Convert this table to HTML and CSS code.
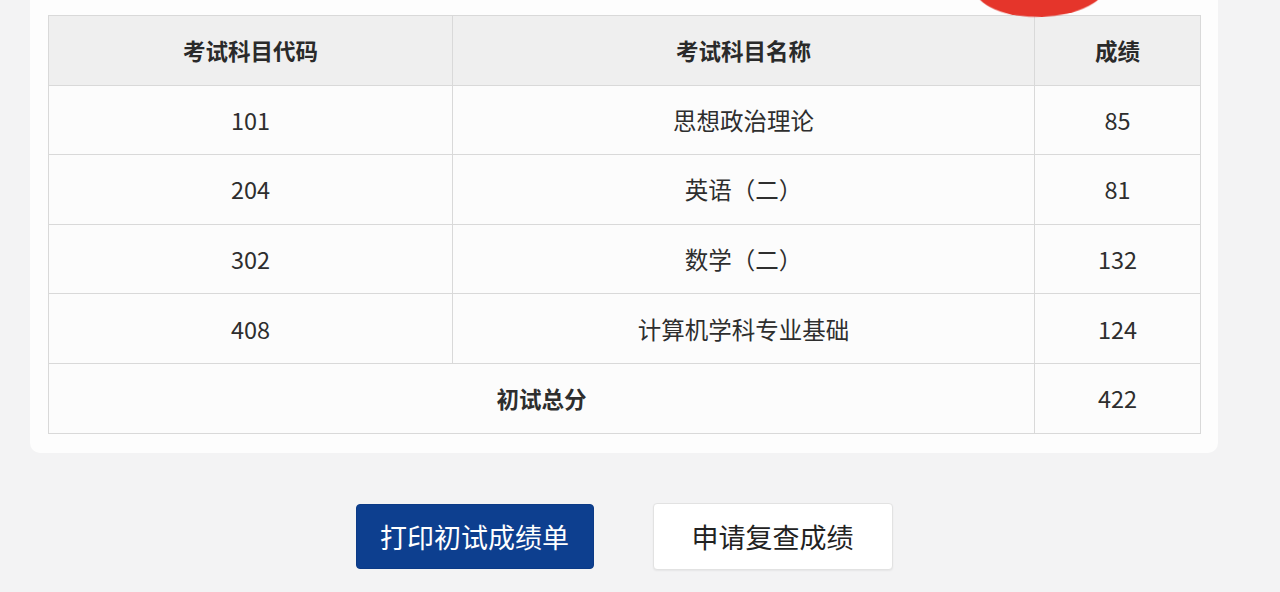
FILE: index.html
```html
<!DOCTYPE html>
<html lang="zh-CN">
<head>
<meta charset="utf-8">
<title>初试成绩</title>
<link rel="stylesheet" href="styles.css">
</head>
<body>
<div class="page">
  <div class="card">
    <span class="mark" aria-hidden="true"></span>
    <table class="scores">
      <thead>
        <tr>
          <th class="c-code">考试科目代码</th>
          <th class="c-name">考试科目名称</th>
          <th class="c-score">成绩</th>
        </tr>
      </thead>
      <tbody>
        <tr><td>101</td><td>思想政治理论</td><td>85</td></tr>
        <tr><td>204</td><td>英语（二）</td><td>81</td></tr>
        <tr><td>302</td><td>数学（二）</td><td>132</td></tr>
        <tr><td>408</td><td>计算机学科专业基础</td><td>124</td></tr>
        <tr class="total"><td colspan="2" class="total-label">初试总分</td><td>422</td></tr>
      </tbody>
    </table>
  </div>
  <div class="actions">
    <button class="btn btn-primary" type="button">打印初试成绩单</button>
    <button class="btn btn-default" type="button">申请复查成绩</button>
  </div>
</div>
</body>
</html>
```

FILE: styles.css
```css
html, body {
  margin: 0;
  padding: 0;
  height: 100%;
}
body {
  background: #f3f3f4;
  font-family: "Noto Sans CJK SC", "Microsoft YaHei", "Noto Sans", sans-serif;
  color: #2e2e2e;
  overflow: hidden;
}
.page {
  padding: 0 62px 0 30px;
}
.card {
  position: relative;
  background: #fdfdfd;
  padding: 15px 17px 19px 18px;
  border-radius: 0 0 10px 10px;
}
.mark {
  position: absolute;
  left: 944px;
  top: -37px;
  width: 134px;
  height: 54px;
  background: #e5352b;
  border-radius: 48% 52% 50% 50% / 40% 40% 60% 60%;
  transform: rotate(-2deg);
  filter: blur(0.6px);
}
.scores {
  width: 100%;
  border-collapse: collapse;
  table-layout: fixed;
  background: #fcfcfc;
  font-size: 23.5px;
}
.scores th,
.scores td {
  border: 1px solid #d9d9d9;
  height: 68.6px;
  padding: 0;
  text-align: center;
  vertical-align: middle;
  font-weight: 400;
}
.scores th {
  background: #efefef;
  font-weight: 700;
  font-size: 22.5px;
  color: #2a2a2a;
}
.c-code { width: 403px; }
.c-name { width: 581px; }
.scores .total-label {
  font-weight: 700;
  font-size: 22.5px;
}
.actions {
  display: flex;
  justify-content: center;
  align-items: center;
  gap: 59px;
  padding-top: 50px;
}
.btn {
  font-family: "Noto Sans CJK SC", "Microsoft YaHei", sans-serif;
  font-size: 27px;
  border-radius: 4px;
  cursor: pointer;
  padding: 0;
}
.btn-primary {
  width: 238px;
  height: 65px;
  background: #0d3f8f;
  color: #ffffff;
  border: 1px solid #0b3a86;
}
.btn-default {
  width: 240px;
  height: 67px;
  background: #ffffff;
  color: #222222;
  border: 1px solid #e2e2e2;
  box-shadow: 0 1px 2px rgba(0,0,0,0.06);
}
```
